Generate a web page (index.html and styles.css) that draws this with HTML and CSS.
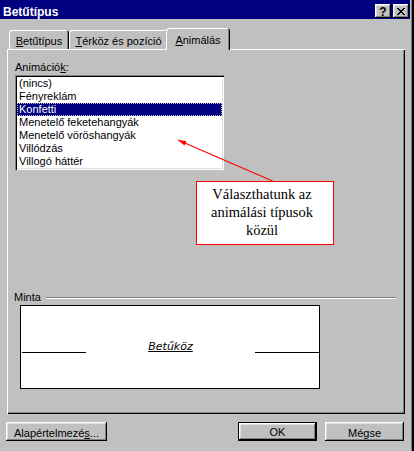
FILE: index.html
```html
<!DOCTYPE html>
<html lang="hu">
<head>
    <meta charset="UTF-8">
    <meta name="viewport" content="width=device-width, initial-scale=1.0">
    <title>Betűtípus</title>
    <link rel="stylesheet" href="styles.css">
</head>
<body>
    <div class="window">
        <div class="titlebar">
            <span class="title">Betűtípus</span>
            <div class="caption-buttons">
                <span class="cap-btn help">?</span>
                <span class="cap-btn close">
                    <svg width="8" height="7" viewBox="0 0 8 7" shape-rendering="crispEdges">
                        <rect x="0" y="0" width="2" height="1"/><rect x="6" y="0" width="2" height="1"/>
                        <rect x="1" y="1" width="2" height="1"/><rect x="5" y="1" width="2" height="1"/>
                        <rect x="2" y="2" width="4" height="1"/>
                        <rect x="3" y="3" width="2" height="1"/>
                        <rect x="2" y="4" width="4" height="1"/>
                        <rect x="1" y="5" width="2" height="1"/><rect x="5" y="5" width="2" height="1"/>
                        <rect x="0" y="6" width="2" height="1"/><rect x="6" y="6" width="2" height="1"/>
                    </svg>
                </span>
            </div>
        </div>

        <div class="tabs">
            <div class="tab tab-font"><u>B</u>etűtípus</div>
            <div class="tab tab-spacing"><u>T</u>érköz és pozíció</div>
            <div class="tab tab-anim active"><u>A</u>nimálás</div>
        </div>

        <div class="panel">
            <div class="field-label">Animáció<u>k</u>:</div>
            <ul class="listbox">
                <li>(nincs)</li>
                <li>Fényreklám</li>
                <li class="selected">Konfetti</li>
                <li>Menetelő feketehangyák</li>
                <li>Menetelő vöröshangyák</li>
                <li>Villódzás</li>
                <li>Villogó háttér</li>
            </ul>

            <div class="group-title">
                <span>Minta</span>
                <span class="etched"></span>
            </div>
            <div class="preview">
                <div class="preview-row">
                    <span class="rule"></span>
                    <span class="sample">Betűköz</span>
                    <span class="rule"></span>
                </div>
            </div>
        </div>

        <div class="buttons">
            <button class="btn btn-defaults">Alapértelmezé<u>s</u>...</button>
            <button class="btn btn-ok">OK</button>
            <button class="btn btn-cancel">Mégse</button>
        </div>

        <!-- annotation on top of the dialog -->
        <svg class="arrow" width="414" height="451" viewBox="0 0 414 451">
            <line x1="272.5" y1="181" x2="183" y2="142.2" stroke="#ff0000" stroke-width="1.1"/>
            <polygon points="177,139.5 186.5,141.2 184.6,145.6" fill="#ff0000"/>
        </svg>
        <div class="callout">Választhatunk az<br>animálási típusok<br>közül</div>
    </div>
</body>
</html>
```

FILE: styles.css
```css
* {
    box-sizing: border-box;
}

body {
    margin: 0;
    font-family: "Liberation Sans", Arial, sans-serif;
    font-size: 11px;
    line-height: 13px;
    color: #000;
    background-color: #c0c0c0;
}

.window {
    position: relative;
    width: 414px;
    height: 451px;
    padding-right: 4px;
    background-color: #c0c0c0;
    box-shadow: inset -2px 0 #000, inset -3px 0 #808080;
    overflow: hidden;
}

/* title bar */
.titlebar {
    height: 19px;
    display: flex;
    justify-content: space-between;
    align-items: flex-start;
    padding: 0 1px 0 3px;
    background-color: #000080;
}

.title {
    padding-top: 5px;
    color: #fff;
    font-weight: bold;
    font-size: 12px;
    line-height: 14px;
}

.caption-buttons {
    display: flex;
    gap: 2px;
    margin-top: 4px;
}

.cap-btn {
    width: 16px;
    height: 14px;
    display: flex;
    align-items: center;
    justify-content: center;
    background-color: #c0c0c0;
    box-shadow: inset -1px -1px #000, inset 1px 1px #fff, inset -2px -2px #808080, inset 2px 2px #dfdfdf;
}

.help {
    font-weight: bold;
    font-size: 12px;
    line-height: 12px;
    padding-top: 1px;
}

.close svg {
    fill: #000;
    margin-top: 0;
}

/* tabs */
.tabs {
    display: flex;
    align-items: flex-end;
    height: 30px;
    padding-left: 9px;
}

.tab {
    height: 19px;
    padding-top: 5px;
    text-align: center;
    border-radius: 3px 3px 0 0;
    box-shadow: inset 1px 1px #fff, inset -1px 0 #000, inset -2px 0 #808080;
}

.tab-font {
    width: 60px;
}

.tab-spacing {
    width: 99px;
}

.tab-anim {
    width: 64px;
}

.tab.active {
    position: relative;
    z-index: 1;
    height: 22px;
    margin-left: -2px;
    margin-bottom: -1px;
    padding-top: 6px;
    background-color: #c0c0c0;
}

/* tab page */
.panel {
    width: 398px;
    height: 365px;
    margin-left: 7px;
    padding: 12px 0 0 8px;
    box-shadow: inset 1px 1px #fff, inset -1px -1px #000, inset -2px -2px #808080;
}

.field-label {
    height: 13px;
}

.listbox {
    list-style: none;
    margin: 1px 0 0;
    padding: 2px;
    width: 209px;
    height: 95px;
    background-color: #fff;
    box-shadow: inset 1px 1px #808080, inset 2px 2px #000, inset -1px -1px #fff, inset -2px -2px #dfdfdf;
}

.listbox li {
    height: 13px;
    padding-left: 2px;
    white-space: nowrap;
}

.listbox li.selected {
    background-color: #000080;
    color: #fff;
    outline: 1px dotted #c0c0c0;
    outline-offset: -1px;
}

.group-title {
    display: flex;
    align-items: center;
    height: 13px;
    margin: 121px 0 0 -1px;
}

.etched {
    flex: 1;
    height: 2px;
    margin: 0 9px 0 5px;
    border-top: 1px solid #808080;
    border-bottom: 1px solid #fff;
}

.preview {
    width: 300px;
    height: 84px;
    margin: 1px 0 0 5px;
    padding-left: 1px;
    border: 1px solid #000;
    background-color: #fff;
}

.preview-row {
    display: flex;
    justify-content: space-between;
    align-items: flex-end;
    height: 13px;
    margin-top: 34px;
}

.rule {
    width: 64px;
    height: 1px;
    background-color: #000;
}

.sample {
    font-family: "DejaVu Sans", sans-serif;
    font-style: italic;
    font-size: 11px;
    line-height: 13px;
    text-decoration: underline;
    text-underline-offset: 1px;
}

/* bottom buttons */
.buttons {
    display: flex;
    margin-top: 8px;
    padding: 0 6px;
}

.btn {
    height: 19px;
    padding: 3px 0 0;
    font-family: inherit;
    font-size: 11px;
    line-height: 13px;
    color: #000;
    background-color: #c0c0c0;
    border: none;
    box-shadow: inset -1px -1px #000, inset 1px 1px #fff, inset -2px -2px #808080, inset 2px 2px #dfdfdf;
}

.btn-defaults {
    width: 101px;
}

.btn-ok {
    width: 79px;
    margin-left: auto;
    margin-right: 8px;
    border: 1px solid #000;
    padding-top: 2px;
}

.btn-cancel {
    width: 79px;
}

/* annotation */
.arrow {
    position: absolute;
    left: 0;
    top: 0;
    pointer-events: none;
}

.callout {
    position: absolute;
    left: 196px;
    top: 181px;
    width: 138px;
    height: 64px;
    padding: 3px 7px 0 1px;
    border: 1px solid #ff0000;
    background-color: #fff;
    font-family: "Liberation Serif", "Times New Roman", serif;
    font-size: 14.5px;
    line-height: 18px;
    text-align: center;
}
```
